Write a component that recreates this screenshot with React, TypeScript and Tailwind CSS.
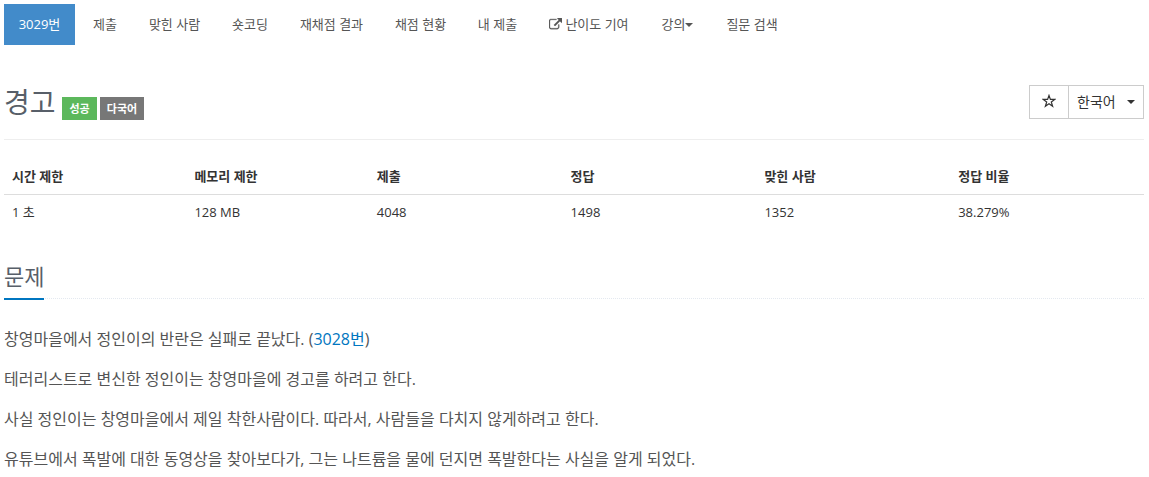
import React from 'react';

interface MenuItem {
  label: string;
  width: string;
  external?: boolean;
  caret?: boolean;
}

const MENU: MenuItem[] = [
  { label: '제출', width: 'w-[56px]' },
  { label: '맞힌 사람', width: 'w-[83px]' },
  { label: '숏코딩', width: 'w-[68px]' },
  { label: '재채점 결과', width: 'w-[95px]' },
  { label: '채점 현황', width: 'w-[83px]' },
  { label: '내 제출', width: 'w-[71px]' },
  { label: '난이도 기여', width: 'w-[112px]', external: true },
  { label: '강의', width: 'w-[65px]', caret: true },
  { label: '질문 검색', width: 'w-[84px]' },
];

const LIMITS = [
  { label: '시간 제한', value: '1 초' },
  { label: '메모리 제한', value: '128 MB' },
  { label: '제출', value: '4048' },
  { label: '정답', value: '1498' },
  { label: '맞힌 사람', value: '1352' },
  { label: '정답 비율', value: '38.279%' },
];

const Caret: React.FC = () => (
  <svg width="8" height="4" viewBox="0 0 8 4" fill="currentColor">
    <path d="M0 0h8L4 4z" />
  </svg>
);

const ExternalIcon: React.FC = () => (
  <svg className="mr-[3px]" width="13" height="13" viewBox="0 0 1792 1792" fill="currentColor" stroke="currentColor" strokeWidth="40">
    <path d="M1408 928v320q0 119-84.5 203.5t-203.5 84.5h-832q-119 0-203.5-84.5t-84.5-203.5v-832q0-119 84.5-203.5t203.5-84.5h704q14 0 23 9t9 23v64q0 14-9 23t-23 9h-704q-66 0-113 47t-47 113v832q0 66 47 113t113 47h832q66 0 113-47t47-113v-320q0-14 9-23t23-9h64q14 0 23 9t9 23zm384-864v512q0 26-19 45t-45 19-45-19l-176-176-652 652q-10 10-23 10t-23-10l-114-114q-10-10-10-23t10-23l652-652-176-176q-19-19-19-45t19-45 45-19h512q26 0 45 19t19 45z" />
  </svg>
);

const StarIcon: React.FC = () => (
  <svg className="-mt-0.5 -ml-px" width="14" height="14" viewBox="0 0 14 14" fill="none" stroke="currentColor" strokeWidth="1.2">
    <path d="M7 1.4l1.4 4h4.3L9.3 8l1.3 4.2L7 9.7l-3.6 2.5L4.7 8 1.3 5.4h4.3z" />
  </svg>
);

export default function App() {
  return (
    <div className="h-[477px] overflow-hidden bg-white pl-1 pr-[5px] pt-1 font-['Open_Sans','Noto_Sans_CJK_KR',sans-serif] text-[13px] text-[#555]">
      <nav className="flex h-[41px] items-center whitespace-nowrap">
        <a className="mr-0.5 flex h-full w-[71px] items-center justify-center bg-[#428bca] text-white">3029번</a>
        {MENU.map((item) => (
          <a key={item.label} className={`flex shrink-0 items-center justify-center ${item.width}`}>
            {item.external && <ExternalIcon />}
            {item.label}
            {item.caret && <Caret />}
          </a>
        ))}
      </nav>

      <header className="mt-10 flex h-[55px] items-start justify-between border-b border-[#eee]">
        <div className="flex items-start">
          <h1 className="w-[58px] text-[28px] leading-[34px] text-[#585f69]">경고</h1>
          <span className="mt-3 flex h-[23px] w-[35px] items-center justify-center bg-[#5cb85c] pt-0.5 text-[11px] font-bold text-white">성공</span>
          <span className="ml-[3px] mt-3 flex h-[23px] w-[44px] items-center justify-center bg-[#777] pt-0.5 text-[11px] font-bold text-white">다국어</span>
        </div>
        <div className="flex h-[34px] border border-[#ccc] text-[14px] text-[#333]">
          <button className="flex w-[39px] items-center justify-center border-r border-[#ccc]"><StarIcon /></button>
          <button className="flex w-[74px] items-center justify-between px-2">
            <span className="pb-0.5">한국어</span>
            <Caret />
          </button>
        </div>
      </header>

      <table className="mt-5 w-full table-fixed text-left text-[13px] text-[#333]">
        <colgroup>
          <col className="w-[16%]" />
          <col className="w-[16%]" />
          <col className="w-[17%]" />
          <col className="w-[17%]" />
          <col className="w-[17%]" />
          <col className="w-[17%]" />
        </colgroup>
        <thead>
          <tr className="h-[34px] border-b border-[#ddd]">
            {LIMITS.map((limit) => <th key={limit.label} className="px-2">{limit.label}</th>)}
          </tr>
        </thead>
        <tbody>
          <tr className="h-[36px]">
            {LIMITS.map((limit) => <td key={limit.label} className="px-2">{limit.value}</td>)}
          </tr>
        </tbody>
      </table>

      <section className="mt-[29px]">
        <div className="flex border-b border-dotted border-[#e4e9f0]">
          <h2 className="-mb-0.5 h-[41px] border-b-2 border-[#0076c0] text-[22px] leading-[35px] text-[#585f69]">문제</h2>
        </div>
        <div className="mt-[27px] space-y-[13px] text-[16px] leading-[27px]">
          <p>창영마을에서 정인이의 반란은 실패로 끝났다. (<a className="text-[#0076c0]">3028번</a>)</p>
          <p>테러리스트로 변신한 정인이는 창영마을에 경고를 하려고 한다.</p>
          <p>사실 정인이는 창영마을에서 제일 착한사람이다. 따라서, 사람들을 다치지 않게하려고 한다.</p>
          <p>유튜브에서 폭발에 대한 동영상을 찾아보다가, 그는 나트륨을 물에 던지면 폭발한다는 사실을 알게 되었다.</p>
        </div>
      </section>
    </div>
  );
}
